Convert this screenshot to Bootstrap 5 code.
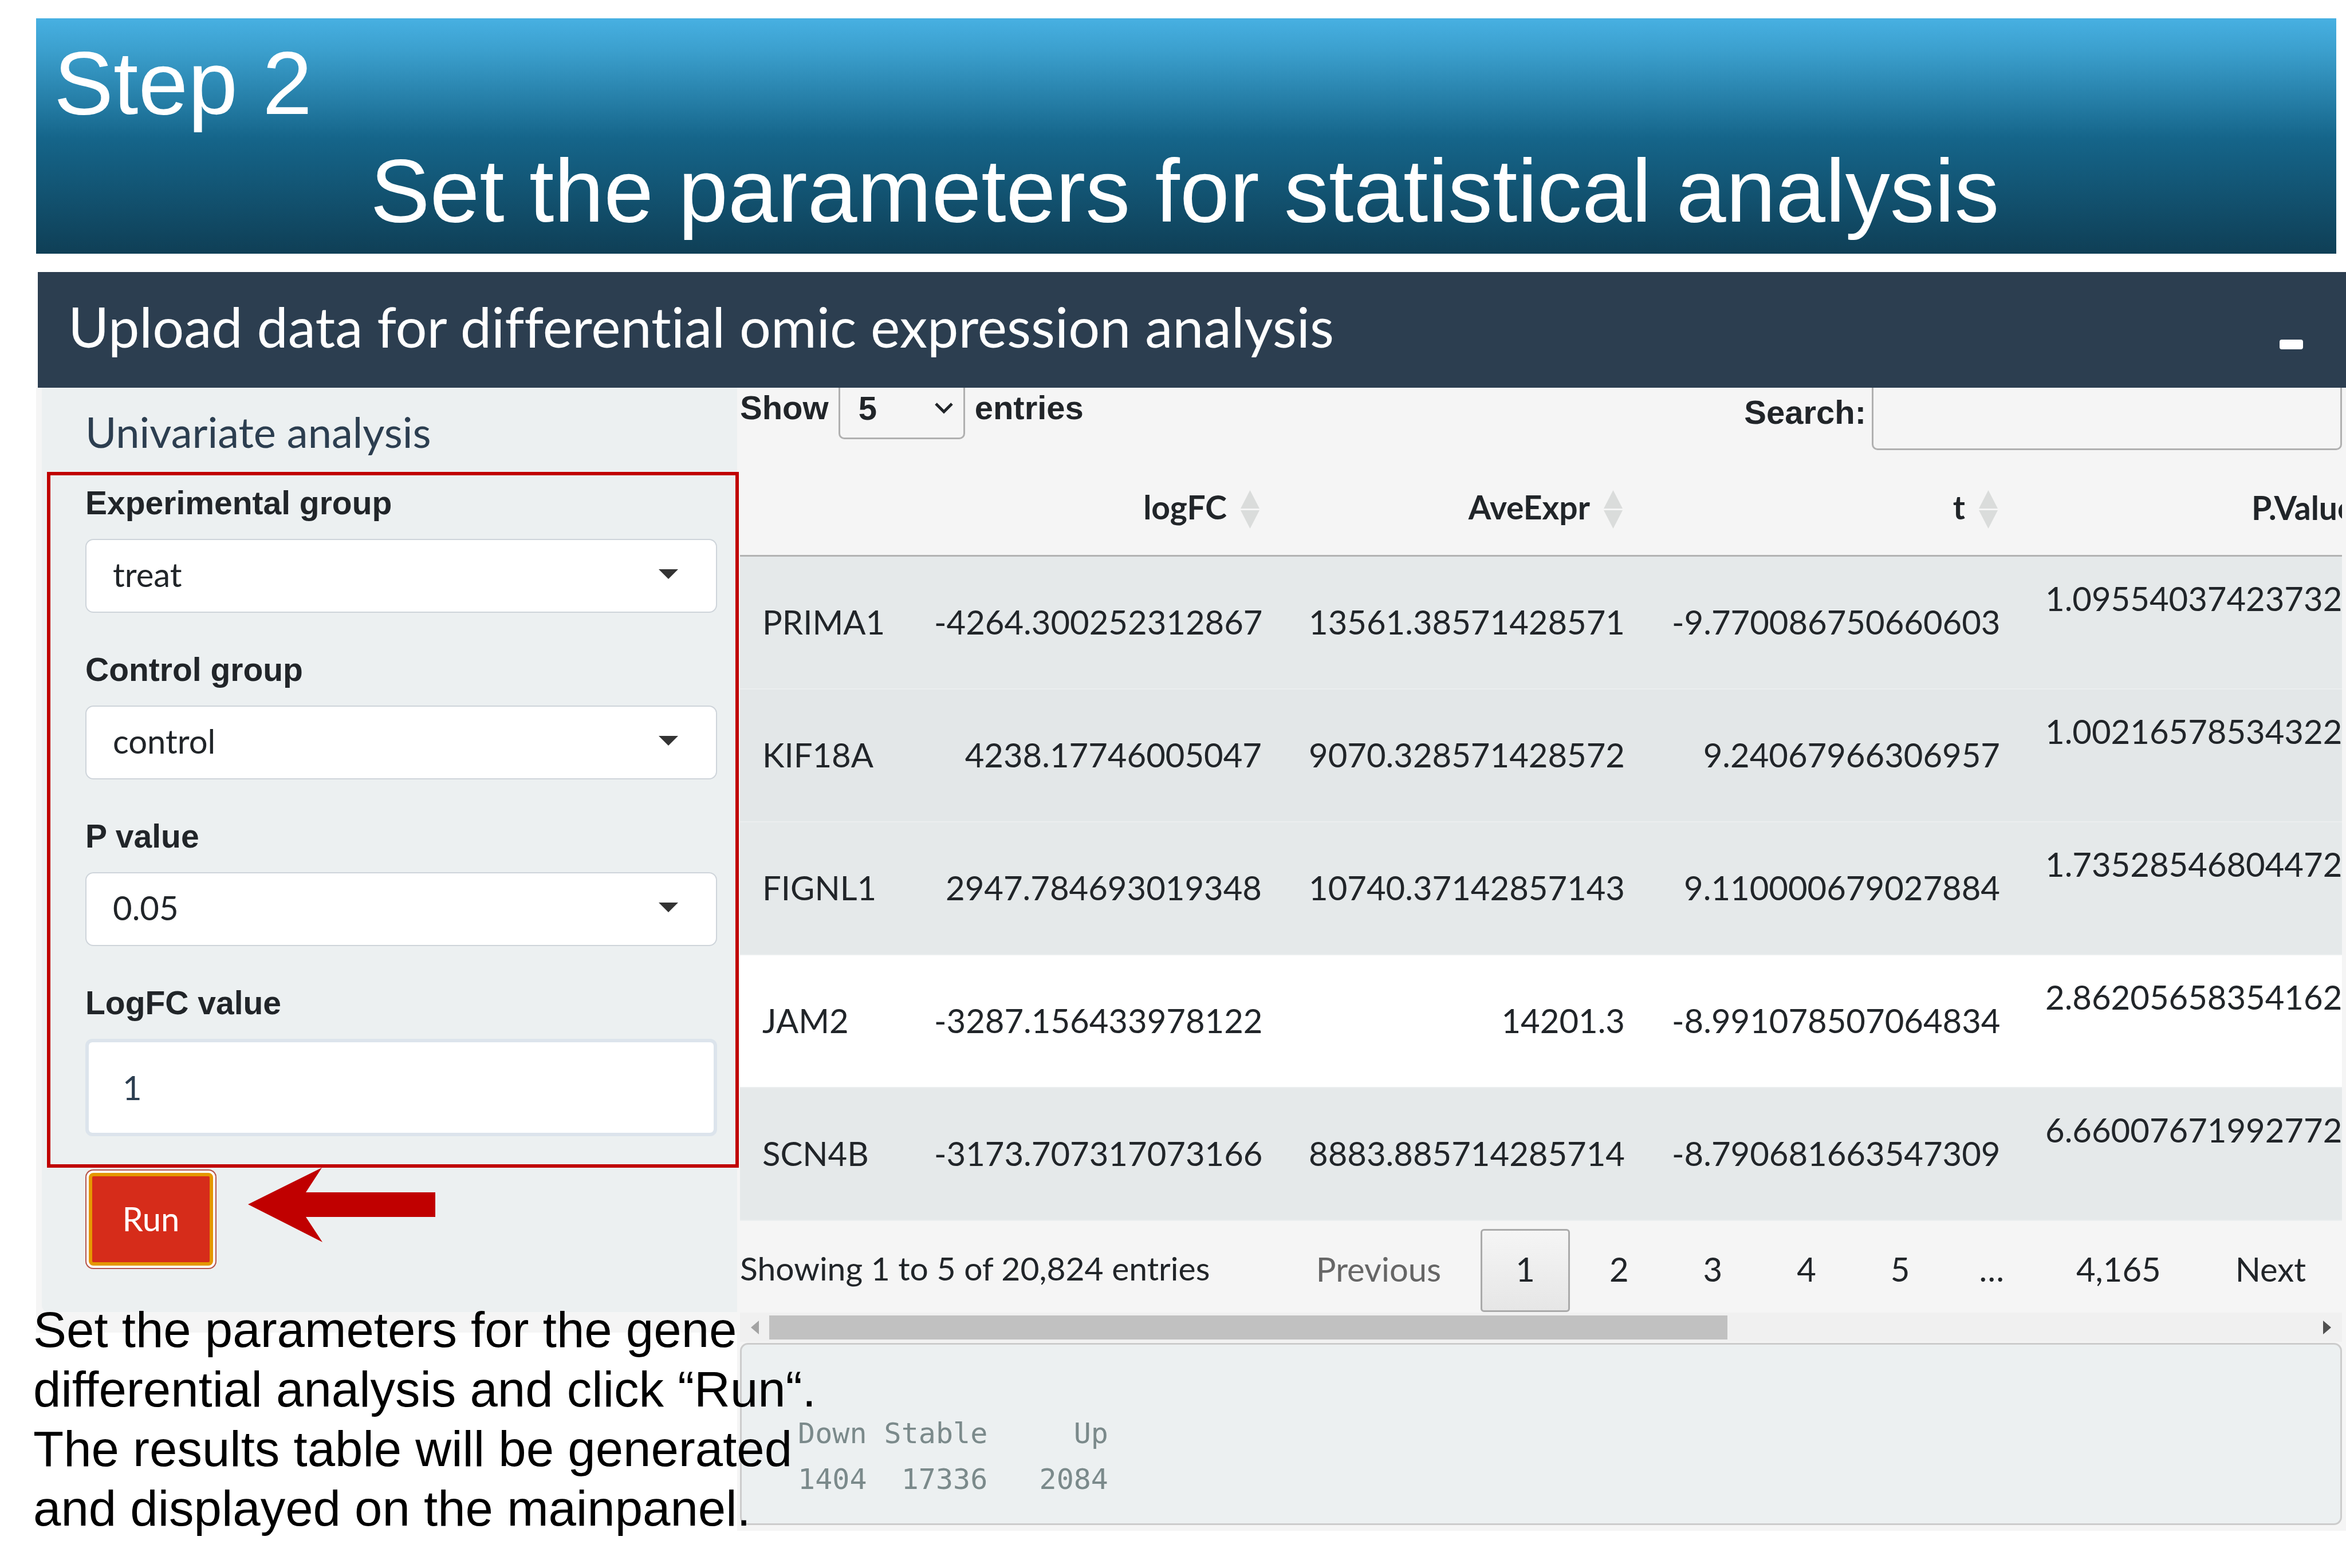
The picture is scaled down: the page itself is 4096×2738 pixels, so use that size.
<!DOCTYPE html>
<html lang="en">
<head>
<meta charset="utf-8">
<meta name="viewport" content="width=device-width, initial-scale=1">
<title>Step 2 - Set the parameters for statistical analysis</title>
<link rel="stylesheet" href="https://cdn.jsdelivr.net/npm/bootstrap@5.3.0/dist/css/bootstrap.min.css">
<style>
  body { font-family: Lato, "Noto Sans", sans-serif; font-size: 58px; line-height: 80px; color: #212529; background: #fff; font-variant-ligatures: none; }
  .arial { font-family: "Liberation Sans", Arial, sans-serif; }
  .slide { padding: 32px 0 64px; }

  .banner { margin: 0 17px 32px 63px; padding: 19px 36px 16px 31px; font-size: 156px; line-height: 188px; background: linear-gradient(#47b0e2, #3b9fcd 14%, #15658a 51%, #0f3f56); }
  .banner h1 { font-size: 156px; line-height: 188px; font-weight: 400; }

  .titlebar { margin-left: 66px; height: 202px; padding: 0 75px 0 53px; background: #2c3e50; }
  .titlebar h2 { font-size: 97px; line-height: 120px; font-weight: 400; padding-bottom: 12px; }
  .collapse-btn { width: 41px; height: 17px; border-radius: 4px; margin-top: 50px; }

  .workspace { margin-left: 63px; }
  .side-col { width: 30.35%; flex: 0 0 auto; background: #f5f5f5; padding: 0 0 36px 10px; z-index: 1; }
  .side-well { background: #ecf0f1; padding: 32px 0 75px; border-bottom-left-radius: 12px; }
  .side-well h3 { font-size: 74px; line-height: 90px; font-weight: 400; color: #2c3e50; margin: 0 0 25px 76px; }
  .frame { border: 6px solid #c00000; margin: 0 -3px 0 9px; padding: 13px 32px 49px 61px; }
  .frame label { font-family: "Liberation Sans", Arial, sans-serif; font-size: 57px; line-height: 70px; font-weight: 700; margin-bottom: 28px; }
  .field { margin-bottom: 64px; }
  .pick { height: 129px; border: 2px solid #ced4da; border-radius: 14px; padding: 0 46px 6px; font-size: 58px; line-height: 80px; color: #212529; background-image: none; }
  .caret { right: 68px; top: 53px; width: 34px; height: 17px; pointer-events: none; }
  .numbox { height: 170px; border: 6px solid #dce4ec; border-radius: 12px; padding: 0 59px 2px; font-size: 58px; line-height: 80px; color: #2c3e50; }
  .run-row { margin-left: 76px; }
  .run-btn { width: 229px; height: 174px; margin-top: 3px; padding: 0 0 2px; border: 0; border-radius: 14px; font-size: 58px; line-height: 80px; color: #fff; background: #d62c1a; box-shadow: inset 0 0 0 2px #b4544e, inset 0 0 0 6px #fff, inset 0 0 0 12px #e59700; }
  .arrow { width: 327px; height: 130px; margin-left: 55px; }

  .main-col { background: #f5f5f5; padding: 0 7px 10px 5px; min-width: 0; }
  .tools { height: 110px; font-size: 58px; line-height: 70px; font-weight: 700; }
  .len-pick { width: 221px; height: 90px; margin: 0 17px; padding: 0 0 16px 32px; border: 3px solid #b0b0b0; border-top: 0; border-radius: 0 0 10px 10px; font-size: 58px; line-height: 70px; font-weight: 700; background: transparent; appearance: none; color: #212529; }
  .chev { right: 37px; top: 24px; width: 34px; height: 22px; pointer-events: none; }
  .find { width: 821px; height: 109px; margin-left: 10px; border: 3px solid #b0b0b0; border-top: 0; border-radius: 0 0 10px 10px; background: transparent; }
  .find-lbl { padding-top: 8px; }

  .results { table-layout: fixed; width: 3100px; border-collapse: separate; border-spacing: 0; white-space: nowrap; }
  .results th { height: 185px; padding: 16px 41px 0; font-size: 57px; font-weight: 700; text-align: right; border-bottom: 3px solid #b2b2b2; }
  .results th svg { width: 33px; height: 67px; margin: 0 4px 4px 24px; }
  .results th:last-child { padding-left: 398px; text-align: left; }
  .results td { height: 232px; padding: 0 41px 3px; text-align: right; background: #e5e9ea; border-bottom: 2px solid #ebeeef; vertical-align: middle; }
  .results td:first-child { text-align: left; padding-left: 39px; }
  .results td:last-child { text-align: left; vertical-align: top; padding-top: 33px; padding-left: 38px; }
  .results .shade td { background: #e3e7e8; }
  .results .plain td { background: #fff; }

  .foot { height: 160px; }
  .foot .info { padding-top: 42px; font-size: 57px; }
  .pages { gap: 8px; padding: 14px 2px 0 0; }
  .pg { padding: 0 58px 6px; height: 145px; border: 3px solid transparent; border-radius: 6px; background: none; color: #212529; }
  .pg.cur { border-color: #aaa; background: linear-gradient(#f5f5f5, #e6e6e6); }
  .pg.off { color: #666; }
  .dots { margin-left: -9px; padding-right: 54px; }

  .hbar { height: 51px; background: #f0f0f0; padding: 5px 19px 4px; }
  .hbar .thumb { width: 1673px; height: 42px; background: #c1c1c1; margin-left: 18px; }
  .hbar svg { width: 14px; height: 24px; }
  .outbox { height: 318px; margin: 2px 0 0; padding: 35px 68px; border: 3px solid #ccc; border-radius: 14px; background: #ecf0f1; color: #7b8a8b; font-family: "DejaVu Sans Mono", "Liberation Mono", monospace; font-size: 50px; line-height: 80px; }

  .note { left: 58px; top: 2270px; font-size: 87px; line-height: 104px; color: #000; z-index: 3; }
</style>
<script src="https://cdn.jsdelivr.net/npm/bootstrap@5.3.0/dist/js/bootstrap.bundle.min.js"></script>
</head>
<body>
<div class="slide position-relative">
  <header class="banner arial text-white">
    <div>Step 2</div>
    <h1 class="text-center m-0">Set the parameters for statistical analysis</h1>
  </header>

  <div class="titlebar d-flex align-items-center justify-content-between text-white">
    <h2 class="m-0">Upload data for differential omic expression analysis</h2>
    <button type="button" class="collapse-btn bg-white border-0 p-0" aria-label="Collapse"></button>
  </div>

  <div class="workspace d-flex align-items-start">
    <aside class="side-col position-relative">
      <form class="side-well">
        <h3>Univariate analysis</h3>
        <div class="frame">
          <div class="field">
            <label class="d-block" for="exp">Experimental group</label>
            <div class="position-relative">
              <select id="exp" class="form-select pick"><option>treat</option></select>
              <svg class="caret position-absolute" viewBox="0 0 34 17"><path d="M0 0H34L17 17Z" fill="#333"/></svg>
            </div>
          </div>
          <div class="field">
            <label class="d-block" for="ctl">Control group</label>
            <div class="position-relative">
              <select id="ctl" class="form-select pick"><option>control</option></select>
              <svg class="caret position-absolute" viewBox="0 0 34 17"><path d="M0 0H34L17 17Z" fill="#333"/></svg>
            </div>
          </div>
          <div class="field">
            <label class="d-block" for="pval">P value</label>
            <div class="position-relative">
              <select id="pval" class="form-select pick"><option>0.05</option></select>
              <svg class="caret position-absolute" viewBox="0 0 34 17"><path d="M0 0H34L17 17Z" fill="#333"/></svg>
            </div>
          </div>
          <label class="d-block" for="lfc">LogFC value</label>
          <input id="lfc" type="text" class="form-control numbox" value="1">
        </div>
        <div class="run-row d-flex align-items-start">
          <button type="button" class="btn run-btn">Run</button>
          <svg class="arrow" viewBox="0 0 327 130"><path d="M0 64L129 0L101 43H327V86H101L130 130Z" fill="#c00000"/></svg>
        </div>
      </form>
    </aside>

    <main class="main-col flex-grow-1">
      <div class="tools arial d-flex justify-content-between align-items-start">
        <div class="d-flex align-items-start">
          <label for="len">Show</label>
          <div class="position-relative">
            <select id="len" class="len-pick"><option>5</option></select>
            <svg class="chev position-absolute" viewBox="0 0 34 22"><path d="M3 4L17 18L31 4" fill="none" stroke="#212529" stroke-width="5"/></svg>
          </div>
          <span>entries</span>
        </div>
        <div class="d-flex align-items-start">
          <label class="find-lbl" for="find">Search:</label>
          <input id="find" type="search" class="find">
        </div>
      </div>

      <div class="overflow-hidden">
        <table class="results">
          <colgroup><col style="width:298px"><col style="width:654px"><col style="width:634px"><col style="width:655px"><col></colgroup>
          <thead>
            <tr>
              <th></th>
              <th>logFC<svg viewBox="0 0 33 67"><path d="M16.500 0L33 32H0ZM0 35H33L16.500 67Z" fill="#dadcdb"/></svg></th>
              <th>AveExpr<svg viewBox="0 0 33 67"><path d="M16.500 0L33 32H0ZM0 35H33L16.500 67Z" fill="#dadcdb"/></svg></th>
              <th>t<svg viewBox="0 0 33 67"><path d="M16.500 0L33 32H0ZM0 35H33L16.500 67Z" fill="#dadcdb"/></svg></th>
              <th>P.Value</th>
            </tr>
          </thead>
          <tbody>
            <tr><td>PRIMA1</td><td>-4264.300252312867</td><td>13561.38571428571</td><td>-9.770086750660603</td><td>1.09554037423732</td></tr>
            <tr class="shade"><td>KIF18A</td><td>4238.17746005047</td><td>9070.328571428572</td><td>9.24067966306957</td><td>1.00216578534322</td></tr>
            <tr><td>FIGNL1</td><td>2947.784693019348</td><td>10740.37142857143</td><td>9.110000679027884</td><td>1.73528546804472</td></tr>
            <tr class="plain"><td>JAM2</td><td>-3287.156433978122</td><td>14201.3</td><td>-8.991078507064834</td><td>2.86205658354162</td></tr>
            <tr><td>SCN4B</td><td>-3173.707317073166</td><td>8883.885714285714</td><td>-8.790681663547309</td><td>6.66007671992772</td></tr>
          </tbody>
        </table>
      </div>

      <div class="foot d-flex justify-content-between align-items-start">
        <div class="info">Showing 1 to 5 of 20,824 entries</div>
        <nav class="pages d-flex" aria-label="Table pages">
          <button type="button" class="pg off">Previous</button>
          <button type="button" class="pg cur">1</button>
          <button type="button" class="pg">2</button>
          <button type="button" class="pg">3</button>
          <button type="button" class="pg">4</button>
          <button type="button" class="pg">5</button>
          <span class="pg dots d-flex align-items-center">…</span>
          <button type="button" class="pg">4,165</button>
          <button type="button" class="pg">Next</button>
        </nav>
      </div>

      <div class="hbar d-flex align-items-center">
        <svg viewBox="0 0 14 24"><path d="M14 0V24L0 12Z" fill="#a3a3a3"/></svg>
        <div class="thumb me-auto"></div>
        <svg viewBox="0 0 14 24"><path d="M0 0V24L14 12Z" fill="#505050"/></svg>
      </div>
      <pre class="outbox">

 Down Stable     Up 
 1404  17336   2084 </pre>
    </main>
  </div>

  <p class="note arial position-absolute m-0">Set the parameters for the gene<br>differential analysis and click “Run“.<br>The results table will be generated<br>and displayed on the mainpanel.</p>
</div>
</body>
</html>
